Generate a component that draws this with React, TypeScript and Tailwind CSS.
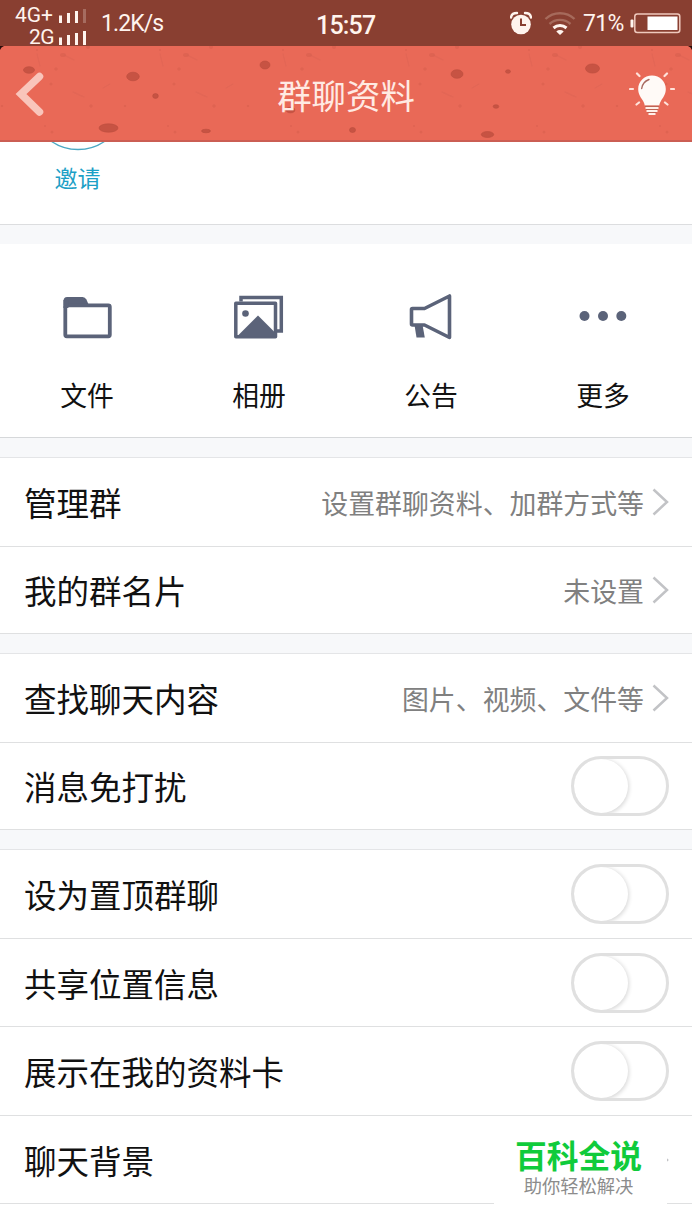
import { useState } from "react"
import clsx from "clsx"

const ink = "#5b6379"

// dark pits on the header texture: cx, cy, rx, ry
const pits = [
  [29, 24, 5.5, 3.3],
  [133, 30.5, 6.3, 4.3],
  [155.5, 50, 2.8, 2.4],
  [108.5, 82, 9.5, 4.2],
  [206, 85, 4.5, 1.8],
  [265, 19, 5, 4],
  [290.5, 64, 4.3, 2.8],
  [352.5, 84, 3, 2.5],
  [457, 28, 6, 4.3],
  [508, 25.5, 2.5, 1.8],
  [496, 60.5, 2.8, 1.8],
  [487.5, 88.5, 6.2, 3],
  [592.5, 22.5, 7, 4.6],
]

function HeaderTexture() {
  return (
    <svg className="absolute inset-0" width="692" height="96" viewBox="0 0 692 96">
      <defs>
        <pattern id="grain" width="123" height="96" patternUnits="userSpaceOnUse">
          <g fill="#cf5848" opacity="0.4">
            <ellipse cx="63" cy="9" rx="3" ry="2" />
            <circle cx="56" cy="23" r="1.8" />
            <circle cx="51" cy="38" r="1.6" />
            <circle cx="91" cy="60" r="1.7" />
            <circle cx="52" cy="86" r="1.5" />
            <circle cx="88" cy="1" r="2" />
            <circle cx="2" cy="60" r="1.3" />
            <circle cx="37" cy="4" r="1" />
            <circle cx="45" cy="80" r="1" />
          </g>
          <g fill="none" stroke="#d65f50" strokeWidth="1.4" opacity="0.35" strokeLinecap="round">
            <path d="M64 9l10 5" />
            <path d="M73 46l11 5" />
            <path d="M37 8l3 12" />
            <path d="M103 42l7-4" />
          </g>
        </pattern>
      </defs>
      <rect width="692" height="96" fill="#e96957" />
      <rect width="692" height="96" fill="url(#grain)" />
      {pits.map(([cx, cy, rx, ry]) => (
        <ellipse key={`${cx}-${cy}`} cx={cx} cy={cy} rx={rx} ry={ry} fill="#c75343" stroke="#bb4d3e" strokeWidth="0.6" />
      ))}
      <rect y="94" width="692" height="2" fill="#cb5e53" />
      <path d="M0 0h4Q1 1 0 4z" fill="#2a0d0a" />
      <path d="M692 0h-4q3 1 4 4z" fill="#2a0d0a" />
    </svg>
  )
}

function Signal({ weak }: { weak?: boolean }) {
  return (
    <svg width="28" height="15" viewBox="0 0 28 15" fill="#fff4ee">
      <rect x="0" y="7.5" width="3" height="7.5" />
      <rect x="8" y="5" width="3" height="10" />
      <rect x="16" y="3" width="3" height="12" />
      <rect x="24" y="1" width="3" height="14" opacity={weak ? 0.25 : 1} />
    </svg>
  )
}

function StatusBar() {
  return (
    <div className="h-[46px] bg-[#893f31] text-[#fff4ee] font-[Roboto,sans-serif] flex items-center pr-[11px] relative">
      <div className="w-[87px] pt-[4px] self-start">
        <div className="flex items-center justify-end h-[22px] gap-[6px]">
          <span className="text-[21px] leading-[20px]">4G+</span>
          <Signal weak />
        </div>
        <div className="flex items-center justify-end h-[22px] gap-[5px]">
          <span className="text-[21px] leading-[20px] tracking-[-0.6px]">2G</span>
          <Signal />
        </div>
      </div>
      <span className="ml-[14px] text-[23px] tracking-[-0.9px] pt-[2px]">1.2K/s</span>
      <span className="absolute left-[316px] top-[8px] text-[25px] leading-[36px] font-medium tracking-[-0.8px]">15:57</span>
      <svg className="ml-auto" width="22" height="24" viewBox="0 0 22 24">
        <circle cx="11" cy="13.500" r="9.800" fill="#fff4ee" />
        <path d="M1 6.500Q1.500 2 7 2M21 6.500Q20.500 2 15 2" stroke="#fff4ee" strokeWidth="2.400" fill="none" strokeLinecap="round" />
        <path d="M11 7.500v6.500h5" stroke="#893f31" strokeWidth="2" fill="none" />
      </svg>
      <svg className="ml-[12px]" width="32" height="24" viewBox="0 0 32 24" fill="none" strokeWidth="2.400">
        <path d="M1.500 8a21 21 0 0 1 29 0" stroke="#a66a5b" />
        <path d="M5.500 13a15.500 15.500 0 0 1 21 0" stroke="#a66a5b" />
        <path d="M9.500 17a10 10 0 0 1 13 0" stroke="#fff4ee" strokeWidth="3" />
        <path d="M12.300 20.500a5.500 5.500 0 0 1 7.400 0L16 24z" fill="#fff4ee" />
      </svg>
      <span className="ml-[7px] w-[47px] whitespace-nowrap text-[23px] tracking-[-0.7px] pt-[3px]">71%</span>
      <svg width="51" height="21" viewBox="0 0 51 21">
        <rect x="0.500" y="6.500" width="3" height="8" rx="1" fill="#fff4ee" />
        <rect x="4.800" y="1" width="45" height="18.500" rx="2.500" fill="none" stroke="#efc9bd" strokeWidth="1.500" />
        <rect x="17.500" y="3.500" width="30" height="13.500" fill="#fff" />
      </svg>
    </div>
  )
}

function Header() {
  return (
    <header className="relative h-[96px]">
      <HeaderTexture />
      <div className="relative h-full flex items-center justify-between pl-[15px] pr-[17px]">
        <svg width="30" height="46" viewBox="0 0 30 46" fill="none">
          <path d="M24.500 5.500L6 23l18.500 18" stroke="#f9c5bb" strokeWidth="7.500" strokeLinecap="round" strokeLinejoin="miter" />
        </svg>
        <h1 className="absolute left-0 w-full pt-[2px] text-center text-[34.4px] font-normal text-[#ffeae3]">群聊资料</h1>
        <svg width="46" height="46" viewBox="0 0 46 46">
          <path
            d="M23 4.500c-7.800 0-13.800 6-13.800 13.500 0 5.500 2.800 8.500 5 12.200 1 1.800 1.300 3 1.500 4.300h14.600c.2-1.300.5-2.500 1.500-4.300 2.200-3.700 5-6.700 5-12.200C36.800 10.500 30.800 4.500 23 4.500z"
            fill="#fffaf7"
          />
          <path d="M12.700 17.500q.8-6.500 7.300-9" stroke="#a9695f" strokeWidth="1.400" fill="none" strokeLinecap="round" />
          <path d="M16.500 37h13M17.500 40h11M19.500 43h7" stroke="#fff0ea" strokeWidth="1.800" />
          <path d="M16 35.300h14M17 38.500h12M18.500 41.500h9" stroke="#bd6354" strokeWidth="1.200" />
          <path
            d="M1 18h3M42 18h3M8 2.500l2.500 2.500M38 2.500L35.500 5M7.500 33.500L10 31.500M38.500 33.500L36 31.500"
            stroke="#ffe2da"
            strokeWidth="2.200"
            strokeLinecap="round"
          />
        </svg>
      </div>
    </header>
  )
}

const FolderIcon = () => (
  <svg width="52" height="52" viewBox="0 0 52 52">
    <path d="M2.600 10.500q0-3.500 3.500-3.500h15.500q2.500 0 3.800 2.500l2 4.500v1h-24.800z" fill={ink} />
    <rect x="4.300" y="15.300" width="44.500" height="31" rx="1.500" fill="none" stroke={ink} strokeWidth="3.800" />
    <path d="M2.400 10v8h5v-8z" fill={ink} />
  </svg>
)

const AlbumIcon = () => (
  <svg width="52" height="52" viewBox="0 0 52 52" fill="none" stroke={ink} strokeWidth="3.500">
    <path d="M8 11.500V7.500h40.300v33.500H43" />
    <rect x="2.800" y="13.300" width="39.700" height="33.400" strokeLinejoin="round" />
    <circle cx="12.500" cy="23.500" r="3.300" fill={ink} stroke="none" />
    <path d="M4 46.500L25 25.500l17 17v4z" fill={ink} stroke="none" />
  </svg>
)

const HornIcon = () => (
  <svg width="52" height="52" viewBox="0 0 52 52">
    <path
      d="M7.500 18.500h12L44.500 6v41.500L19.500 35H7.500q-1 0-1-1V19.500q0-1 1-1z"
      fill="none"
      stroke={ink}
      strokeWidth="3.600"
      strokeLinejoin="round"
    />
    <path d="M9.500 35h8l2.300 12.500H11.500z" fill={ink} />
  </svg>
)

const MoreIcon = () => (
  <svg width="52" height="52" viewBox="0 0 52 52" fill={ink}>
    <circle cx="7.500" cy="26" r="5" />
    <circle cx="26" cy="26" r="5" />
    <circle cx="44.300" cy="26" r="5" />
  </svg>
)

const actions = [
  { label: "文件", Icon: FolderIcon },
  { label: "相册", Icon: AlbumIcon },
  { label: "公告", Icon: HornIcon },
  { label: "更多", Icon: MoreIcon },
]

function Chevron() {
  return (
    <svg className="ml-[8px]" width="17" height="30" viewBox="0 0 17 30" fill="none">
      <path d="M1.500 2.500L15 15 1.500 27.500" stroke="#c2c3c6" strokeWidth="2.500" />
    </svg>
  )
}

function Toggle({ label }: { label: string }) {
  const [on, setOn] = useState(false)
  return (
    <button
      role="switch"
      aria-checked={on}
      aria-label={label}
      onClick={() => setOn(!on)}
      className={clsx(
        "flex w-[98px] h-[60px] rounded-full border-[3px] border-[#e0e0e0] overflow-hidden",
        on ? "justify-end bg-green-400" : "bg-white"
      )}
    >
      <span className="w-[54px] h-[54px] rounded-full bg-white shadow-[0_1px_4px_1px_rgba(0,0,0,0.16)]" />
    </button>
  )
}

type RowProps = { label: string; value?: string; toggle?: boolean; className: string }

function Row({ label, value, toggle, className }: RowProps) {
  return (
    <div className={clsx("flex items-center border-b border-[#dfe0e1] pl-[24px] pr-[23px]", className)}>
      <span className="flex-1 text-[32.5px] leading-[48px] text-[#111]">{label}</span>
      {value && <span className="text-[26.9px] leading-[40px] pt-px text-[#808080]">{value}</span>}
      {toggle ? <Toggle label={label} /> : <Chevron />}
    </div>
  )
}

const Group = ({ children }: { children: React.ReactNode }) => (
  <section className="border-t border-[#e4e5e7] bg-white">{children}</section>
)

export default function App() {
  return (
    <div className="relative w-[692px] h-[1230px] overflow-hidden bg-white font-['Noto_Sans_CJK_SC',sans-serif]">
      <StatusBar />
      <Header />

      <div className="h-[83px] border-b border-[#dcdddf] flex flex-col items-start pl-[49px]">
        <svg width="58" height="10" viewBox="0 0 58 10" fill="none">
          <circle cx="29" cy="-39.500" r="47" stroke="#4aa9c4" strokeWidth="1.300" />
        </svg>
        <span className="w-[57px] text-center text-[23px] leading-[34px] pt-[8px] text-[#1ca0c6]">邀请</span>
      </div>
      <div className="h-[19px] bg-[#f7f8fa]" />

      <div className="h-[194px] border-b border-[#d6d8da] grid grid-cols-4 pl-px pr-[3px] pt-[46px]">
        {actions.map(({ label, Icon }) => (
          <div key={label} className="flex flex-col items-center gap-[33px]">
            <Icon />
            <span className="text-[26.8px] leading-[40px] text-[#111]">{label}</span>
          </div>
        ))}
      </div>

      <div className="bg-[#f7f8fa] pt-[19px] flex flex-col gap-[19px]">
        <Group>
          <Row label="管理群" value="设置群聊资料、加群方式等" className="h-[89px]" />
          <Row label="我的群名片" value="未设置" className="h-[87px]" />
        </Group>
        <Group>
          <Row label="查找聊天内容" value="图片、视频、文件等" className="h-[89px]" />
          <Row label="消息免打扰" toggle className="h-[87px]" />
        </Group>
        <Group>
          <Row label="设为置顶群聊" toggle className="h-[89px]" />
          <Row label="共享位置信息" toggle className="h-[88px]" />
          <Row label="展示在我的资料卡" toggle className="h-[89px]" />
          <Row label="聊天背景" className="h-[88px]" />
        </Group>
      </div>

      <div className="absolute left-[494px] top-[1130px] w-[173px] h-[80px] bg-white flex flex-col items-center pt-[5px] pr-[4px]">
        <span className="text-[31.8px] leading-[38px] font-bold text-[#10cb3b]">百科全说</span>
        <span className="text-[18.3px] leading-[24px] text-[#8c8c8c]">助你轻松解决</span>
      </div>
    </div>
  )
}
